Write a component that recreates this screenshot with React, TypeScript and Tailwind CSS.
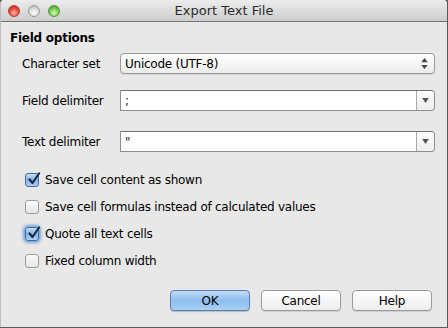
import React from 'react'

const font = { fontFamily: '"DejaVu Sans", "Liberation Sans", sans-serif' }

function Check({ checked, focus }: { checked?: boolean; focus?: boolean }) {
  return (
    <div
      className={
        'relative w-[14px] h-[14px] rounded-[3px] border shrink-0 ' +
        (checked
          ? 'border-[#4a6a96] bg-gradient-to-b from-[#c6def7] via-[#80b3e8] to-[#aed0f4]'
          : 'border-[#9c9c9c] bg-gradient-to-b from-[#fbfbfb] to-[#e6e6e6]') +
        (focus ? ' shadow-[0_0_3px_2px_rgba(80,140,220,0.75)]' : '')
      }
    >
      {checked && (
        <svg viewBox="0 0 14 14" className="absolute left-[1px] -top-[2px] w-[14px] h-[14px]">
          <path d="M2.5 7.5 L5.5 11 L12 1.5" fill="none" stroke="#1a2a44" strokeWidth="2.2" strokeLinecap="round" strokeLinejoin="round" />
        </svg>
      )}
    </div>
  )
}

function Combo({ value }: { value: string }) {
  return (
    <div className="flex flex-1 h-[21px] bg-white border border-[#8d8d8d] border-t-[#6f6f6f] rounded-r-[4px]">
      <div className="flex-1 flex items-center px-[4px] text-[12px] text-[#222]">{value}</div>
      <div className="w-[18px] border-l border-[#a8a8a8] flex items-center justify-center bg-gradient-to-b from-[#fdfdfd] to-[#eeeeee] rounded-r-[4px]">
        <svg viewBox="0 0 8 6" className="w-[7px] h-[5px]"><path d="M0 0 H8 L4 6 Z" fill="#555" /></svg>
      </div>
    </div>
  )
}

function Btn({ label, primary }: { label: string; primary?: boolean }) {
  return (
    <div
      className={
        'w-[80px] h-[21px] rounded-[4px] border flex items-center justify-center text-[12px] text-black ' +
        (primary
          ? 'border-[#5a7fb3] bg-gradient-to-b from-[#c3dcf6] via-[#8dbdee] to-[#a9d0f6] shadow-[0_1px_1px_rgba(0,0,0,0.2)]'
          : 'border-[#9a9a9a] bg-gradient-to-b from-white to-[#ededed] shadow-[0_1px_1px_rgba(0,0,0,0.12)]')
      }
    >
      {label}
    </div>
  )
}

export default function App() {
  return (
    <div className="w-[448px] h-[328px] bg-[#5a5a5a]" style={font}>
      <div className="w-[447px] h-[327px] bg-[#e8e8e8] flex flex-col border-l border-[#bdbdbd] rounded-t-[4px] overflow-hidden">
        <div className="h-[22px] shrink-0 flex items-center relative bg-gradient-to-b from-[#ececec] to-[#cdcdcd] border-b border-[#737373]">
          <div className="flex gap-[8px] pl-[7px]">
            <span className="w-[12px] h-[12px] rounded-full border border-[#b23a33] bg-[radial-gradient(circle_at_50%_70%,#ffb3a8,#e5443a_55%,#b8231c)]" />
            <span className="w-[12px] h-[12px] rounded-full border border-[#9a9a9a] bg-[radial-gradient(circle_at_50%_70%,#ffffff,#d9d9d9_55%,#a9a9a9)]" />
            <span className="w-[12px] h-[12px] rounded-full border border-[#4e9a35] bg-[radial-gradient(circle_at_50%_70%,#d8ffb5,#72c44d_55%,#3e8d22)]" />
          </div>
          <div className="absolute inset-0 flex items-center justify-center text-[13px] text-[#2b2b2b] pointer-events-none">Export Text File</div>
        </div>

        <div className="flex flex-col pl-[9px] pr-[12px] pt-[8px] tracking-[-0.25px]">
          <div className="h-[16px] flex items-center text-[12px] font-bold text-black">Field options</div>

          <div className="flex items-center mt-[7px] pl-[12px]">
            <div className="w-[98px] text-[12px] text-black">Character set</div>
            <div className="flex flex-1 h-[21px] rounded-[4px] border border-[#9a9a9a] bg-gradient-to-b from-white to-[#ececec] shadow-[0_1px_1px_rgba(0,0,0,0.08)]">
              <div className="flex-1 flex items-center px-[4px] text-[12px] text-black">Unicode (UTF-8)</div>
              <div className="w-[20px] flex items-center justify-center">
                <svg viewBox="0 0 7 12" className="w-[7px] h-[11px]">
                  <path d="M0 4.5 L3.5 0 L7 4.5 Z M0 7.5 H7 L3.5 12 Z" fill="#444" />
                </svg>
              </div>
            </div>
          </div>

          <div className="flex items-center mt-[16px] pl-[12px]">
            <div className="w-[98px] text-[12px] text-black">Field delimiter</div>
            <Combo value=";" />
          </div>

          <div className="flex items-center mt-[20px] pl-[12px]">
            <div className="w-[98px] text-[12px] text-black">Text delimiter</div>
            <Combo value={'"'} />
          </div>

          <div className="flex flex-col mt-[14px] pl-[15px] text-[12px] text-black">
            <div className="h-[27px] flex items-center gap-[6px]"><Check checked />Save cell content as shown</div>
            <div className="h-[27px] flex items-center gap-[6px]"><Check />Save cell formulas instead of calculated values</div>
            <div className="h-[27px] flex items-center gap-[6px]"><Check checked focus />Quote all text cells</div>
            <div className="h-[27px] flex items-center gap-[6px]"><Check />Fixed column width</div>
          </div>

          <div className="flex justify-end gap-[11px] mt-[16px] pr-[3px]">
            <Btn label="OK" primary />
            <Btn label="Cancel" />
            <Btn label="Help" />
          </div>
        </div>
      </div>
    </div>
  )
}
